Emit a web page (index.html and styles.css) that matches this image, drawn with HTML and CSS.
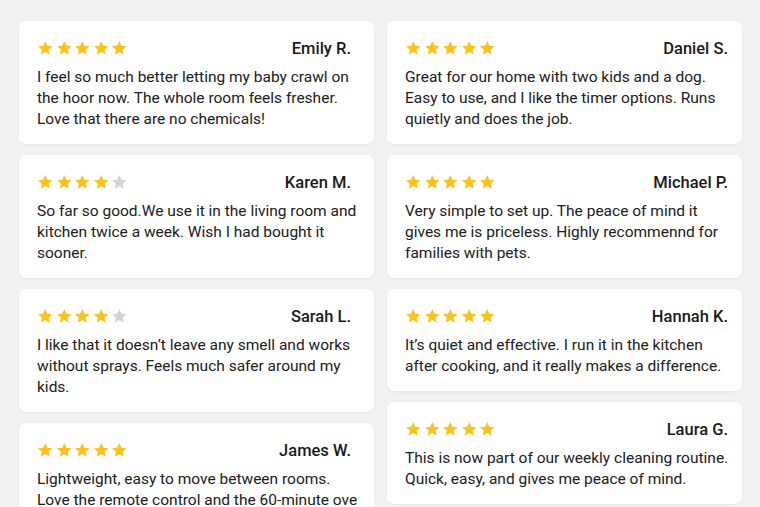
FILE: index.html
```html
<!DOCTYPE html>
<html lang="en">
<head>
<meta charset="utf-8">
<title>Reviews</title>
<link rel="stylesheet" href="styles.css">
</head>
<body>
<svg width="0" height="0" class="defs" aria-hidden="true">
  <defs>
    <symbol id="star" viewBox="0 0 24 24">
      <path d="M12 1.6l3.1 6.9 7.4.7-5.6 5 1.7 7.3L12 17.6l-6.6 3.9 1.7-7.3-5.6-5 7.4-.7z"/>
    </symbol>
  </defs>
</svg>
<main class="grid">
  <div class="col col-left">
    <article class="card">
      <div class="head">
        <div class="stars s5"><svg><use href="#star"/></svg><svg><use href="#star"/></svg><svg><use href="#star"/></svg><svg><use href="#star"/></svg><svg><use href="#star"/></svg></div>
        <span class="name">Emily R.</span>
      </div>
      <p class="body">I feel so much better letting my baby crawl on the hoor now. The whole room feels fresher. Love that there are no chemicals!</p>
    </article>
    <article class="card">
      <div class="head">
        <div class="stars s4"><svg><use href="#star"/></svg><svg><use href="#star"/></svg><svg><use href="#star"/></svg><svg><use href="#star"/></svg><svg><use href="#star"/></svg></div>
        <span class="name">Karen M.</span>
      </div>
      <p class="body">So far so good.We use it in the living room and kitchen twice a week. Wish I had bought it sooner.</p>
    </article>
    <article class="card">
      <div class="head">
        <div class="stars s4"><svg><use href="#star"/></svg><svg><use href="#star"/></svg><svg><use href="#star"/></svg><svg><use href="#star"/></svg><svg><use href="#star"/></svg></div>
        <span class="name">Sarah L.</span>
      </div>
      <p class="body">I like that it doesn’t leave any smell and works without sprays. Feels much safer around my kids.</p>
    </article>
    <article class="card">
      <div class="head">
        <div class="stars s5"><svg><use href="#star"/></svg><svg><use href="#star"/></svg><svg><use href="#star"/></svg><svg><use href="#star"/></svg><svg><use href="#star"/></svg></div>
        <span class="name">James W.</span>
      </div>
      <div class="body clip">Lightweight, easy to move between rooms.<br><span class="nowrap">Love the remote control and the 60-minute overnight mode.</span></div>
    </article>
  </div>
  <div class="col col-right">
    <article class="card">
      <div class="head">
        <div class="stars s5"><svg><use href="#star"/></svg><svg><use href="#star"/></svg><svg><use href="#star"/></svg><svg><use href="#star"/></svg><svg><use href="#star"/></svg></div>
        <span class="name">Daniel S.</span>
      </div>
      <p class="body">Great for our home with two kids and a dog. Easy to use, and I like the timer options. Runs quietly and does the job.</p>
    </article>
    <article class="card">
      <div class="head">
        <div class="stars s5"><svg><use href="#star"/></svg><svg><use href="#star"/></svg><svg><use href="#star"/></svg><svg><use href="#star"/></svg><svg><use href="#star"/></svg></div>
        <span class="name">Michael P.</span>
      </div>
      <p class="body">Very simple to set up. The peace of mind it gives me is priceless. Highly recommennd for families with pets.</p>
    </article>
    <article class="card">
      <div class="head">
        <div class="stars s5"><svg><use href="#star"/></svg><svg><use href="#star"/></svg><svg><use href="#star"/></svg><svg><use href="#star"/></svg><svg><use href="#star"/></svg></div>
        <span class="name">Hannah K.</span>
      </div>
      <p class="body">It’s quiet and effective. I run it in the kitchen after cooking, and it really makes a difference.</p>
    </article>
    <article class="card">
      <div class="head">
        <div class="stars s5"><svg><use href="#star"/></svg><svg><use href="#star"/></svg><svg><use href="#star"/></svg><svg><use href="#star"/></svg><svg><use href="#star"/></svg></div>
        <span class="name">Laura G.</span>
      </div>
      <p class="body">This is now part of our weekly cleaning routine. Quick, easy, and gives me peace of mind.</p>
    </article>
  </div>
</main>
</body>
</html>
```
FILE: styles.css
```css
html, body {
  margin: 0;
  padding: 0;
  background: #f2f2f2;
  height: 100%;
  overflow: hidden;
}
body {
  font-family: Roboto, "Noto Sans", sans-serif;
  color: #202020;
}
.defs {
  position: absolute;
  width: 0;
  height: 0;
}
.grid {
  display: grid;
  grid-template-columns: 355px 355px;
  column-gap: 13px;
  padding: 21px 0 0 19px;
}
.col {
  display: flex;
  flex-direction: column;
  gap: 11px;
}
.card {
  background: #fff;
  border-radius: 7px;
  box-shadow: 0 1px 3px rgba(0, 0, 0, 0.06);
  padding: 18px 10px 14px 18px;
}
.head {
  display: flex;
  align-items: center;
  justify-content: space-between;
  height: 18px;
  margin-bottom: 10px;
}
.stars {
  display: flex;
  gap: 2px;
  fill: #fbc21f;
}
.stars svg {
  width: 16.5px;
  height: 16.5px;
}
.stars.s4 svg:nth-child(5) {
  fill: #d4d4d4;
}
.name {
  font-size: 16.5px;
  font-weight: 500;
  color: #1a1a1a;
  margin-right: 4px;
}
.col-left .name {
  margin-right: 13px;
}
.body {
  margin: 0;
  font-size: 15.5px;
  line-height: 21px;
}
.clip {
  overflow: hidden;
  margin-right: 7px;
}
.nowrap {
  white-space: nowrap;
}
```
